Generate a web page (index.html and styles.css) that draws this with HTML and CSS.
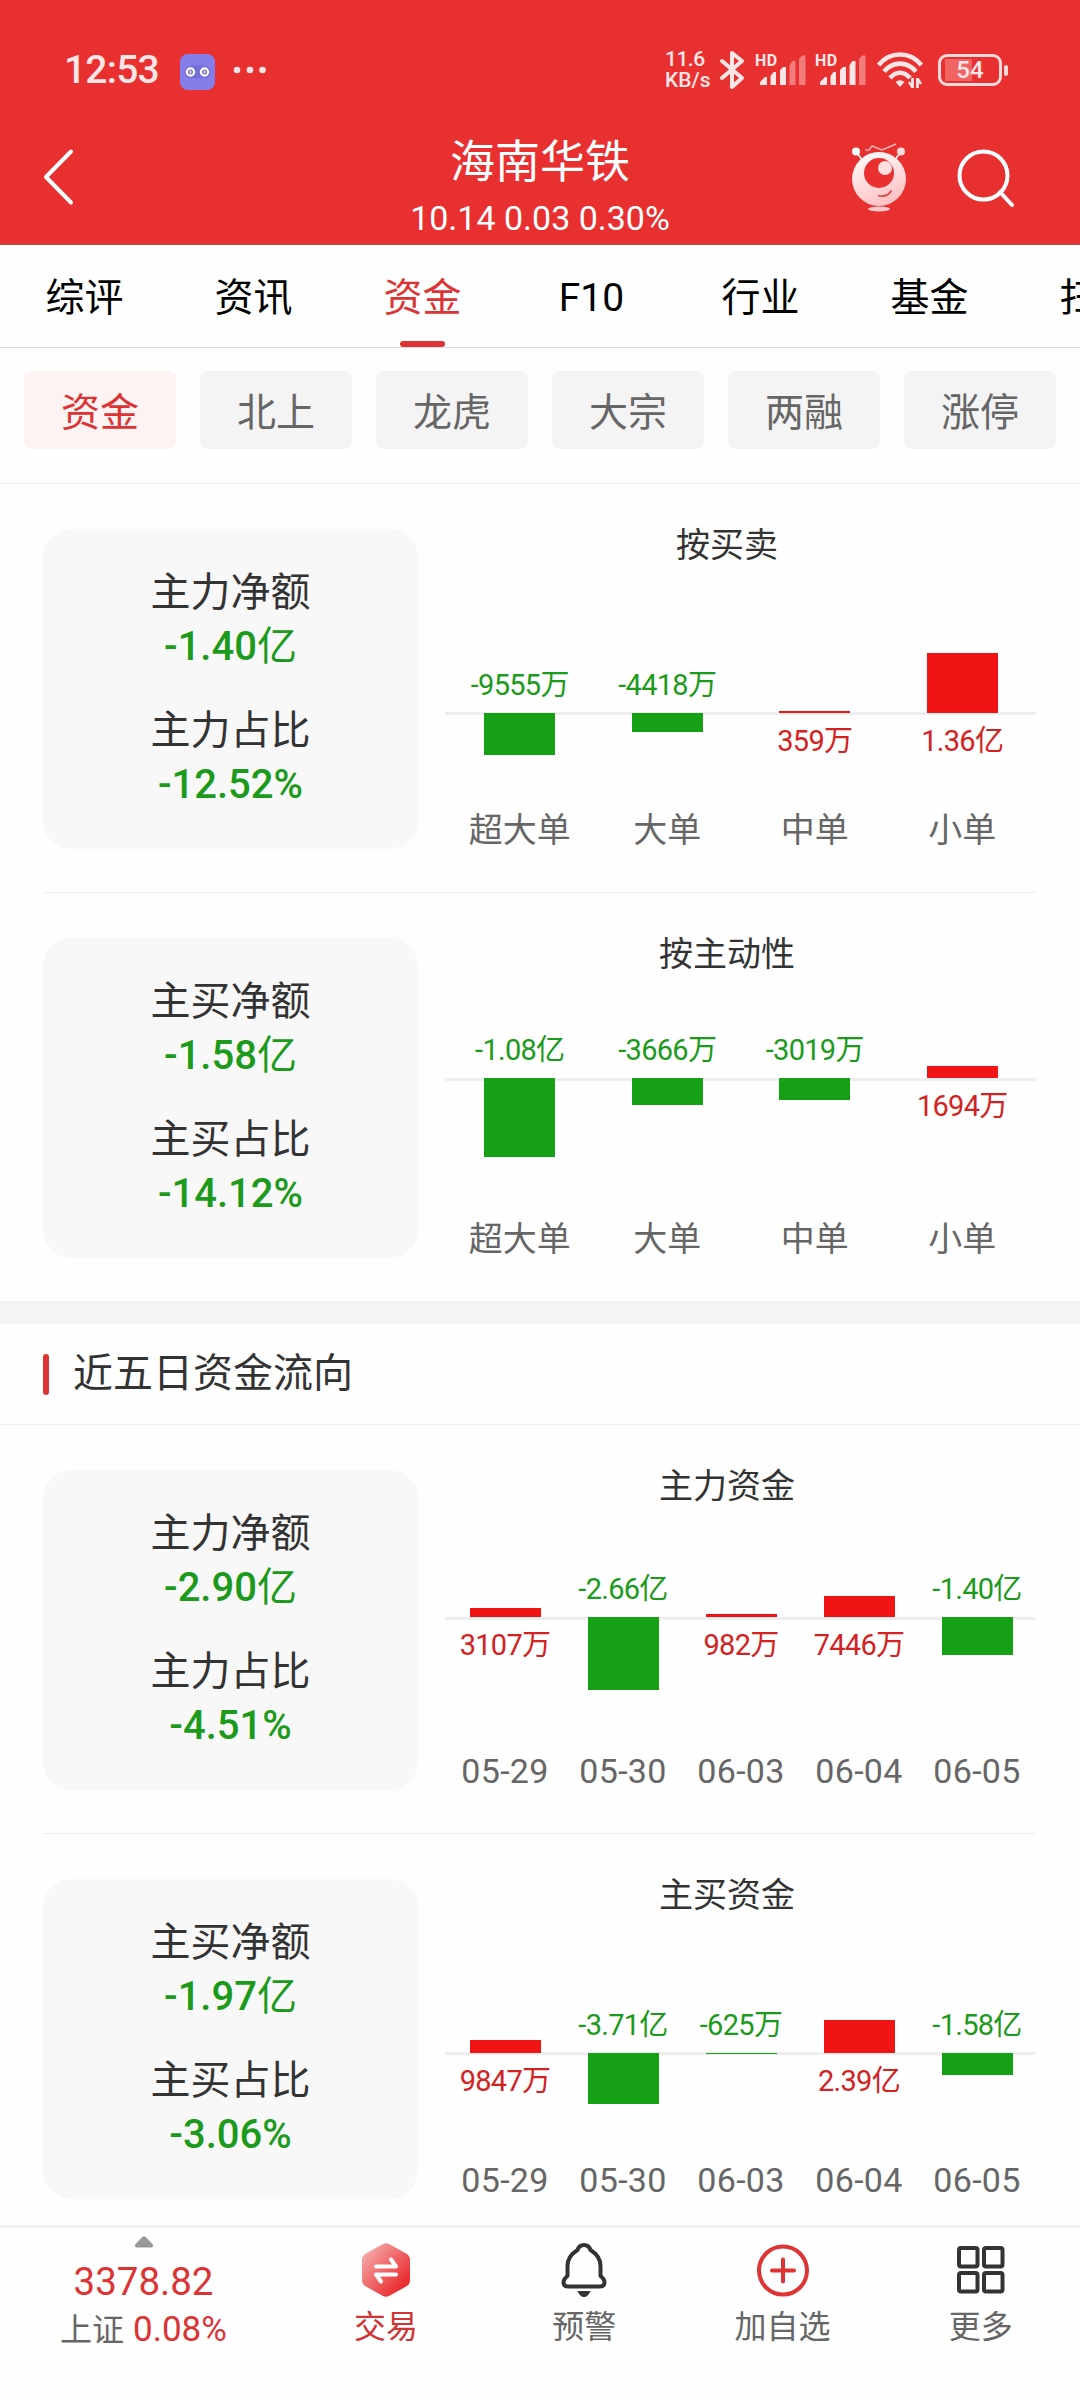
FILE: index.html
```html
<!DOCTYPE html>
<html lang="zh-CN">
<head>
  <meta charset="UTF-8" />
  <title>海南华铁 - 资金</title>
  <meta name="viewport" content="width=device-width, initial-scale=1.0" />
  <link rel="stylesheet" href="styles.css">
</head>
<body>

  <div class="header">
    <!-- Status bar -->
    <div class="status">
      <span class="time">12:53</span>
      <svg class="app-icon" width="35" height="36" viewBox="0 0 35 36">
        <rect width="35" height="36" rx="8" fill="#857eea"/>
        <rect x="5" y="11.500" width="25" height="13" rx="6" fill="#756ed6"/>
        <circle cx="10.500" cy="18" r="3.600" fill="#6058b8" stroke="#fff" stroke-width="2.200"/>
        <circle cx="24.500" cy="18" r="3.600" fill="#6058b8" stroke="#fff" stroke-width="2.200"/>
        <path d="M8.500 18h4M10.500 16v4M22.500 18h4M24.500 16v4" stroke="#fff" stroke-width=".8"/>
      </svg>
      <svg width="33" height="8" viewBox="0 0 33 8" fill="#ffe6e6">
        <circle cx="4" cy="4" r="3.300"/><circle cx="17" cy="4" r="3.300"/><circle cx="29.500" cy="4" r="3.300"/>
      </svg>
      <div class="status-right">
        <div class="speed"><span class="num">11.6</span><span>KB/s</span></div>
        <svg class="bt" width="26" height="42" viewBox="0 0 26 42" fill="none" stroke="#ffe6e6" stroke-width="4" stroke-linejoin="round" stroke-linecap="round">
          <path d="M3 12L23 29L13 38V4L23 12L3 29"/>
        </svg>
        <div class="signal">
          <span>HD</span>
          <svg width="46" height="30" viewBox="0 0 46 30" fill="#ffe6e6">
            <path d="M0 30v-3l5-5h2v8zM10.500 30v-9l3-4h2.500v13zM20 30v-15l3-3h3v18z"/>
            <path d="M29.500 30V10l3-4h3v24zM39 30V4l3-3.500h3.500V30z" opacity=".42"/>
          </svg>
        </div>
        <div class="signal">
          <span>HD</span>
          <svg width="46" height="30" viewBox="0 0 46 30" fill="#ffe6e6">
            <path d="M0 30v-3l5-5h2v8zM10.500 30v-9l3-4h2.500v13zM20 30v-15l3-3h3v18zM29.500 30V10l3-4h3v24z"/>
            <path d="M39 30V4l3-3.500h3.500V30z" opacity=".42"/>
          </svg>
        </div>
        <svg class="wifi" width="46" height="36" viewBox="0 0 46 36" fill="none" stroke="#ffe6e6" stroke-width="4.600">
          <path d="M1.500 13C13-1 33-1 44.500 13M7 19.500C16 9 30 9 39 19.500M13 26C19 19 27 19 33 26"/>
          <path d="M18.500 30Q23 26.500 27.500 30L23 35z" fill="#ffe6e6" stroke="none"/>
          <path d="M35.500 26v10M40.500 36V26" stroke-width="2.800"/>
          <path d="M32 30l3 5M44 32l-3-5" stroke-width="2.400"/>
        </svg>
        <div class="battery"><b>54</b></div>
        <i class="battery-tip"></i>
      </div>
    </div>

    <div class="titlebar">
      <svg class="back" width="32" height="58" viewBox="0 0 32 58" fill="none" stroke="#fff" stroke-width="4" stroke-linecap="round" stroke-linejoin="round">
        <path d="M29 3.500L4 29L29 54.500"/>
      </svg>
      <div class="stock">
        <h1>海南华铁</h1>
        <p>10.14 0.03 0.30%</p>
      </div>
      <div class="actions">
        <svg width="56" height="70" viewBox="0 0 56 70">
          <defs>
            <linearGradient id="bot" x1="0" y1="0" x2=".4" y2="1">
              <stop offset="0" stop-color="#fff"/><stop offset="1" stop-color="#ffc4c6"/>
            </linearGradient>
          </defs>
          <g fill="none" stroke="#fff" stroke-width="1.500">
            <path d="M14 7h4l3-4 10 4L45 1" stroke="#ffb3b3"/>
            <path d="M6 10l6 8M49 10l-6 8"/>
          </g>
          <circle cx="5" cy="8.500" r="4" fill="#fff"/>
          <circle cx="50" cy="8.500" r="4" fill="#ffdcdc"/>
          <circle cx="28" cy="36" r="27" fill="url(#bot)"/>
          <circle cx="28" cy="30" r="15" fill="#e83030"/>
          <circle cx="34" cy="25" r="7" fill="#ffdfe0"/>
          <path d="M27 52.500Q36 55 40.500 47.500" fill="none" stroke="#e04848" stroke-width="1.800"/>
          <ellipse cx="28" cy="66" rx="11" ry="2.600" fill="#ffc8ca"/>
        </svg>
        <svg width="60" height="60" viewBox="0 0 60 60" fill="none" stroke="#fff" stroke-width="4" stroke-linecap="round">
          <circle cx="27.500" cy="27.500" r="24"/>
          <path d="M44 44L56 57"/>
        </svg>
      </div>
    </div>
  </div>

  <div class="tabs">
    <a>综评</a>
    <a>资讯</a>
    <a class="active">资金</a>
    <a>F10</a>
    <a>行业</a>
    <a>基金</a>
    <a>扫雷</a>
  </div>

  <div class="chips">
    <button class="active">资金</button>
    <button>北上</button>
    <button>龙虎</button>
    <button>大宗</button>
    <button>两融</button>
    <button>涨停</button>
  </div>

  <div class="row">
    <div class="card">
      <h3>主力净额</h3>
      <p>-1.40<small>亿</small></p>
      <h3>主力占比</h3>
      <p>-12.52%</p>
    </div>
    <div class="chart">
      <h2>按买卖</h2>
      <div class="plot" style="--up: 152px">
        <div class="col down"><span>-9555万</span><i style="height: 42px"></i></div>
        <div class="col down"><span>-4418万</span><i style="height: 19px"></i></div>
        <div class="col up"><i style="height: 2px"></i><span>359万</span></div>
        <div class="col up"><i style="height: 60px"></i><span>1.36亿</span></div>
      </div>
      <div class="names"><span>超大单</span><span>大单</span><span>中单</span><span>小单</span></div>
    </div>
  </div>

  <div class="row last">
    <div class="card">
      <h3>主买净额</h3>
      <p>-1.58<small>亿</small></p>
      <h3>主买占比</h3>
      <p>-14.12%</p>
    </div>
    <div class="chart">
      <h2>按主动性</h2>
      <div class="plot low-axis" style="--up: 108px">
        <div class="col down"><span>-1.08亿</span><i style="height: 79px"></i></div>
        <div class="col down"><span>-3666万</span><i style="height: 27px"></i></div>
        <div class="col down"><span>-3019万</span><i style="height: 22px"></i></div>
        <div class="col up"><i style="height: 12px"></i><span>1694万</span></div>
      </div>
      <div class="names"><span>超大单</span><span>大单</span><span>中单</span><span>小单</span></div>
    </div>
  </div>

  <div class="section-title"><i></i><span>近五日资金流向</span></div>

  <div class="row">
    <div class="card">
      <h3>主力净额</h3>
      <p>-2.90<small>亿</small></p>
      <h3>主力占比</h3>
      <p>-4.51%</p>
    </div>
    <div class="chart">
      <h2>主力资金</h2>
      <div class="plot low-axis" style="--up: 115px">
        <div class="col up"><i style="height: 9px"></i><span>3107万</span></div>
        <div class="col down"><span>-2.66亿</span><i style="height: 73px"></i></div>
        <div class="col up"><i style="height: 3px"></i><span>982万</span></div>
        <div class="col up"><i style="height: 21px"></i><span>7446万</span></div>
        <div class="col down"><span>-1.40亿</span><i style="height: 38px"></i></div>
      </div>
      <div class="names dates"><span>05-29</span><span>05-30</span><span>06-03</span><span>06-04</span><span>06-05</span></div>
    </div>
  </div>

  <div class="row last">
    <div class="card">
      <h3>主买净额</h3>
      <p>-1.97<small>亿</small></p>
      <h3>主买占比</h3>
      <p>-3.06%</p>
    </div>
    <div class="chart">
      <h2>主买资金</h2>
      <div class="plot" style="--up: 142px">
        <div class="col up"><i style="height: 13px"></i><span>9847万</span></div>
        <div class="col down"><span>-3.71亿</span><i style="height: 51px"></i></div>
        <div class="col down"><span>-625万</span><i style="height: 1px"></i></div>
        <div class="col up"><i style="height: 33px"></i><span>2.39亿</span></div>
        <div class="col down"><span>-1.58亿</span><i style="height: 22px"></i></div>
      </div>
      <div class="names dates"><span>05-29</span><span>05-30</span><span>06-03</span><span>06-04</span><span>06-05</span></div>
    </div>
  </div>

  <!-- Bottom bar -->
  <div class="bottom">
    <div class="index">
      <svg width="20" height="12" viewBox="0 0 20 12" fill="#999"><path d="M8.500 1Q10-.5 11.500 1L18.500 8Q20 11 17.500 11.500H2.500Q0 11 1.500 8z"/></svg>
      <strong>3378.82</strong>
      <p>上证 <em>0.08%</em></p>
    </div>
    <div class="item red">
      <svg width="56" height="56" viewBox="0 0 56 56">
        <defs>
          <linearGradient id="hex" x1="0" y1="0" x2="1" y2="1">
            <stop offset=".1" stop-color="#f5aaaa"/><stop offset=".8" stop-color="#ea3033"/>
          </linearGradient>
        </defs>
        <path d="M25 2Q28 .5 31 2L49 12Q52 14 52 17V39Q52 42 49 44L31 54Q28 55.500 25 54L7 44Q4 42 4 39V17Q4 14 7 12z" fill="url(#hex)"/>
        <path d="M18 24.500H38L33 17.500M38 32.500H18L23 39.500" fill="none" stroke="#fff" stroke-width="4" stroke-linecap="round" stroke-linejoin="round"/>
      </svg>
      <span>交易</span>
    </div>
    <div class="item">
      <svg width="56" height="56" viewBox="0 0 56 56" fill="none" stroke="#333" stroke-width="4" stroke-linejoin="round">
        <path d="M28 3C24 3 22.500 5 21.500 8C15 12 11.500 17 11.500 24V34C9 36 7.500 37.500 7.500 40Q7.500 44.500 12 44.500H44Q48.500 44.500 48.500 40C48.500 37.500 47 36 44.500 34V24C44.500 17 41 12 34.500 8C33.500 5 32 3 28 3z"/>
        <path d="M21.500 49H34.500Q32 55 28 55T21.500 49z" fill="#333" stroke="none"/>
      </svg>
      <span>预警</span>
    </div>
    <div class="item">
      <svg width="56" height="56" viewBox="0 0 56 56" fill="none" stroke="#df3434" stroke-width="4" stroke-linecap="round">
        <circle cx="28" cy="28.500" r="24"/>
        <path d="M28 17.500V39.500M17 28.500H39"/>
      </svg>
      <span>加自选</span>
    </div>
    <div class="item">
      <svg width="56" height="56" viewBox="0 0 56 56" fill="none" stroke="#333" stroke-width="4">
        <rect x="6" y="6" width="18.500" height="18.500" rx="2"/>
        <rect x="31" y="6" width="18.500" height="18.500" rx="2"/>
        <rect x="6" y="31" width="18.500" height="18.500" rx="2"/>
        <rect x="31" y="31" width="18.500" height="18.500" rx="2"/>
      </svg>
      <span>更多</span>
    </div>
  </div>

</body>
</html>
```
FILE: styles.css
```css
* { margin: 0; padding: 0; box-sizing: border-box; }
body {
  width: 1080px;
  height: 2400px;
  overflow: hidden;
  background: #fefefe;
  font-family: Roboto, "Noto Sans CJK SC", sans-serif;
  color: #333;
  display: flex;
  flex-direction: column;
}
svg { display: block; flex: none; }
i, em { font-style: normal; }
h1, h2, h3 { font-weight: 400; }

/* Header */
.header {
  height: 245px;
  flex: none;
  background: #e83030;
  border-bottom: 1px solid #b84848;
  color: #fff;
}
.status {
  height: 130px;
  padding: 10px 72px 0 64px;
  display: flex;
  align-items: center;
  color: #ffe6e6;
}
.time {
  width: 116px;
  font-size: 39px;
  font-weight: 500;
  letter-spacing: -0.8px;
}
.app-icon { margin: 4px 18px 0 0; }
.status-right {
  margin-left: auto;
  display: flex;
  align-items: center;
}
.speed {
  width: 55px;
  font-size: 21px;
  line-height: 21px;
  font-weight: 500;
  display: flex;
  flex-direction: column;
}
.speed .num { letter-spacing: -0.5px; }
.bt { margin: 0 10px 0 -1px; }
.signal {
  width: 50px;
  height: 34px;
  margin-right: 10px;
  display: grid;
}
.signal > * { grid-area: 1 / 1; }
.signal span {
  font-size: 16px;
  line-height: 16px;
  font-weight: 700;
  letter-spacing: 0.5px;
}
.signal svg { margin: 2px 0 0 5px; }
.wifi { margin: 0 15px 0 2px; }
.battery {
  width: 64px;
  height: 32px;
  border: 3px solid #ffd9d9;
  border-radius: 9px;
  background: linear-gradient(#f06464, #f06464) 4px 2px / 27px 22px no-repeat;
  text-align: center;
  line-height: 26px;
}
.battery b { font-size: 24px; font-weight: 500; }
.battery-tip {
  width: 4px;
  height: 11px;
  margin-left: 2px;
  border-radius: 2px;
  background: #ffd9d9;
}
.titlebar {
  height: 114px;
  padding: 0 64px 0 42px;
  display: grid;
  grid-template-columns: 200px 1fr 178px;
}
.back { margin-top: 18px; }
.stock { text-align: center; }
.stock h1 {
  font-size: 45px;
  line-height: 56px;
  margin-top: 5px;
}
.stock p {
  font-size: 34px;
  line-height: 40px;
  margin-top: 7px;
}
.actions {
  display: flex;
  justify-content: flex-end;
  align-items: flex-start;
  gap: 49px;
  padding-top: 13px;
}
.actions svg:last-child { margin-top: 5px; }

/* Tabs */
.tabs {
  height: 103px;
  flex: none;
  display: flex;
  overflow: hidden;
  border-bottom: 1px solid #ddd;
  font-size: 39px;
  color: #000;
}
.tabs a {
  width: 169px;
  flex: none;
  line-height: 106px;
  text-align: center;
  position: relative;
}
.tabs a.active { color: #dc3434; }
.tabs a.active::after {
  content: "";
  position: absolute;
  left: 62px;
  bottom: 0;
  width: 45px;
  height: 6px;
  border-radius: 3px;
  background: #dc3434;
}
.chips {
  height: 136px;
  flex: none;
  padding: 23px 24px 0;
  display: flex;
  gap: 24px;
  border-bottom: 1px solid #eee;
}
.chips button {
  width: 152px;
  height: 78px;
  padding-bottom: 3px;
  border: none;
  border-radius: 8px;
  background: #f4f4f4;
  color: #666;
  font-family: inherit;
  font-size: 39px;
}
.chips button.active {
  background: #fef3f3;
  color: #dc3434;
}

/* Card + chart */
.row {
  height: 409px;
  flex: none;
  margin: 0 44px 0 43px;
  padding-top: 45px;
  display: flex;
  gap: 27px;
  border-bottom: 1px solid #eee;
}
.row.last {
  height: 408px;
  border-bottom: none;
}
.card {
  width: 375px;
  height: 320px;
  padding-top: 37px;
  border-radius: 28px;
  background: #f8f8f8;
  text-align: center;
}
.card h3 {
  font-size: 40px;
  line-height: 54px;
}
.card p {
  font-size: 40px;
  line-height: 54px;
  margin-bottom: 30px;
  font-weight: 500;
  color: #1c9a1c;
}
.card small {
  font-size: 40px;
  font-weight: 400;
}
.chart { width: 591px; }
.chart h2 {
  font-size: 34px;
  line-height: 33px;
  height: 32px;
  padding-right: 27px;
  text-align: center;
}
.plot {
  height: 252px;
  padding-left: 1px;
  display: flex;
  position: relative;
}
/* zero line, drawn behind the bars */
.plot::before {
  content: "";
  position: absolute;
  left: 0;
  right: 0;
  top: calc(var(--up) - 1px);
  height: 3px;
  background: #eee;
}
.plot.low-axis::before { top: var(--up); }
.col {
  flex: 1;
  display: grid;
  grid-template-rows: var(--up) 1fr;
  justify-items: center;
  position: relative;
}
.col i { width: 71px; }
.col span {
  font-size: 29px;
  line-height: 30px;
  letter-spacing: -0.7px;
  white-space: nowrap;
}
.col.down span {
  align-self: end;
  margin-bottom: 13px;
  color: #1c9a1c;
}
.col.down i { background: #16a016; }
.col.up i {
  align-self: end;
  background: #f01414;
}
.col.up span {
  margin-top: 13px;
  color: #d22222;
}
.names {
  display: flex;
  padding-left: 1px;
  font-size: 34px;
  line-height: 34px;
  color: #666;
}
.names span { flex: 1; text-align: center; }
.dates { letter-spacing: 0.3px; }

.section-title {
  height: 124px;
  flex: none;
  border-top: 23px solid #f4f4f4;
  border-bottom: 1px solid #eee;
  padding: 0 0 0 43px;
  display: flex;
  align-items: center;
  gap: 24px;
  font-size: 40px;
  line-height: 60px;
}
.section-title i {
  width: 6px;
  height: 41px;
  border-radius: 3px;
  background: #dc3434;
}

/* Bottom bar */
.bottom {
  height: 175px;
  flex: none;
  margin-top: -17px;
  border-top: 3px solid #f4f4f4;
  display: flex;
}
.index {
  width: 287px;
  padding-top: 8px;
  display: flex;
  flex-direction: column;
  align-items: center;
}
.index strong {
  font-size: 38.5px;
  line-height: 44px;
  margin-top: 12px;
  font-weight: 400;
  color: #dc3434;
}
.index p {
  font-size: 32px;
  line-height: 40px;
  margin-top: 6px;
  color: #666;
}
.index em {
  margin-left: 1px;
  font-size: 35px;
  color: #dc3434;
}
.item {
  flex: 1;
  padding-top: 14px;
  display: flex;
  flex-direction: column;
  align-items: center;
  font-size: 32px;
  line-height: 40px;
  color: #666;
}
.item span { margin-top: 9px; }
.item.red { color: #d03434; }
```
